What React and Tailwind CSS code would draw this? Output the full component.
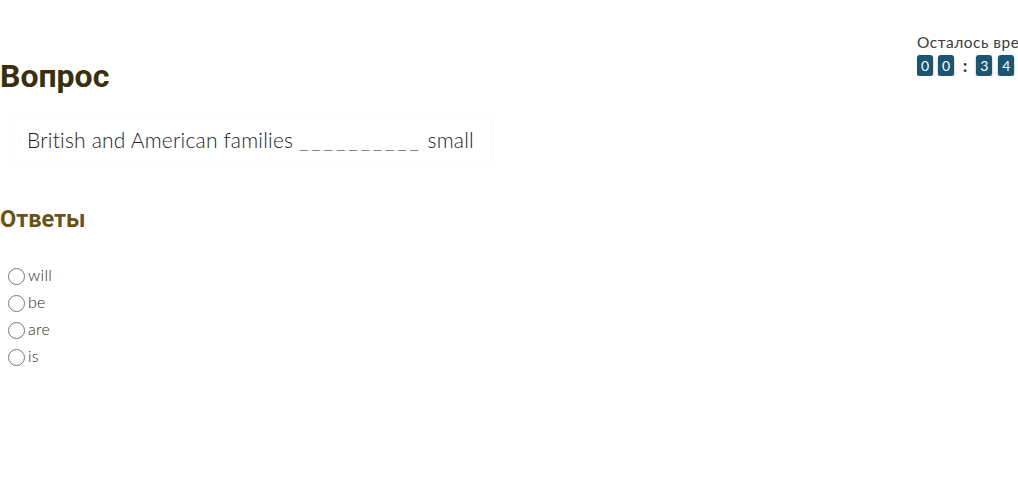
import React from 'react';

const answers = ['will', 'be', 'are', 'is'];

const Digit = ({ value }) => (
  <span className="flex h-[21px] w-[16px] items-center justify-center rounded-[3px] bg-[#1b5571] text-[14px] leading-none text-white shadow-[0_1px_2px_rgba(0,0,0,0.45)]">
    {value}
  </span>
);

const Timer = () => (
  <div className="float-right mt-[34px] w-[101px] overflow-hidden whitespace-nowrap">
    <p className="text-[15.5px] leading-[17px] tracking-[0.5px] text-[#3d3d33]">Осталось времени</p>
    <div className="mt-[4px] flex items-center">
      <Digit value="0" />
      <span className="ml-[5px]"><Digit value="0" /></span>
      <span className="mx-[9px] text-[16px] font-black leading-none text-[#2b3a40]">:</span>
      <Digit value="3" />
      <span className="ml-[6px]"><Digit value="4" /></span>
    </div>
  </div>
);

export default function App() {
  return (
    <div className="h-[479px] w-[1018px] overflow-hidden bg-white font-['Lato',sans-serif]">
      <Timer />
      <h1 className="pt-[57px] font-['Roboto',sans-serif] text-[32px] font-bold leading-[38px] text-[#3a2f0b]">
        Вопрос
      </h1>
      <div className="mt-[19px] ml-[10px] w-[480px] px-[17px] py-[12px] shadow-[0_0_10px_rgba(0,0,0,0.025)]">
        <p className="whitespace-nowrap text-[21px] font-light leading-[27px] tracking-[0.2px] text-[#222]">
          British and American families <span className="tracking-[2.8px]">__________</span> small
        </p>
      </div>
      <h2 className="mt-[40px] font-['Roboto',sans-serif] text-[23.5px] font-bold leading-[28px] text-[#6a5317]">
        Ответы
      </h2>
      <ul className="mt-[33px] ml-[8px] flex flex-col gap-[9.5px]">
        {answers.map((a) => (
          <li key={a} className="flex h-[17.5px] items-center gap-[3px]">
            <span className="mt-[4px] h-[17px] w-[17px] rounded-full border border-[#777]" />
            <span className="text-[16px] font-light leading-[17px] tracking-[0.3px] text-[#2a2a22]">{a}</span>
          </li>
        ))}
      </ul>
    </div>
  );
}
